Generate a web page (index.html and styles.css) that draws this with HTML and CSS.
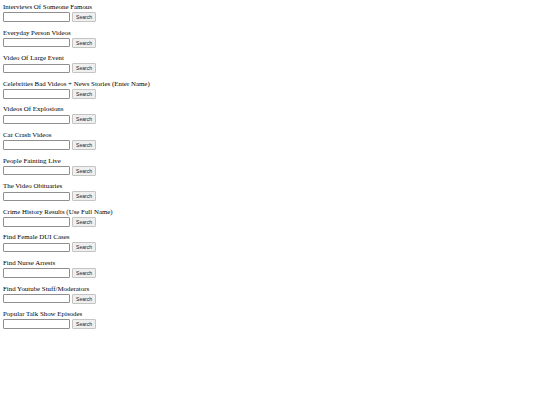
FILE: index.html
```html
<!DOCTYPE html>
<html>
<head>
<meta charset="utf-8">
<link rel="stylesheet" href="styles.css">
</head>
<body>
<div class="list">
  <form class="group"><div class="label">Interviews Of Someone Famous</div><div class="row"><input class="field" type="text"><button class="btn" type="button">Search</button></div></form>
  <form class="group"><div class="label">Everyday Person Videos</div><div class="row"><input class="field" type="text"><button class="btn" type="button">Search</button></div></form>
  <form class="group"><div class="label">Video Of Large Event</div><div class="row"><input class="field" type="text"><button class="btn" type="button">Search</button></div></form>
  <form class="group"><div class="label">Celebrities Bad Videos + News Stories (Enter Name)</div><div class="row"><input class="field" type="text"><button class="btn" type="button">Search</button></div></form>
  <form class="group"><div class="label">Videos Of Explosions</div><div class="row"><input class="field" type="text"><button class="btn" type="button">Search</button></div></form>
  <form class="group"><div class="label">Car Crash Videos</div><div class="row"><input class="field" type="text"><button class="btn" type="button">Search</button></div></form>
  <form class="group"><div class="label">People Fainting Live</div><div class="row"><input class="field" type="text"><button class="btn" type="button">Search</button></div></form>
  <form class="group"><div class="label">The Video Obituaries</div><div class="row"><input class="field" type="text"><button class="btn" type="button">Search</button></div></form>
  <form class="group"><div class="label">Crime History Results (Use Full Name)</div><div class="row"><input class="field" type="text"><button class="btn" type="button">Search</button></div></form>
  <form class="group"><div class="label">Find Female DUI Cases</div><div class="row"><input class="field" type="text"><button class="btn" type="button">Search</button></div></form>
  <form class="group"><div class="label">Find Nurse Arrests</div><div class="row"><input class="field" type="text"><button class="btn" type="button">Search</button></div></form>
  <form class="group"><div class="label">Find Youtube Stuff/Moderators</div><div class="row"><input class="field" type="text"><button class="btn" type="button">Search</button></div></form>
  <form class="group"><div class="label">Popular Talk Show Episodes</div><div class="row"><input class="field" type="text"><button class="btn" type="button">Search</button></div></form>
</div>
</body>
</html>
```
FILE: styles.css
```css
html, body {
  margin: 0;
  padding: 0;
  background: #ffffff;
}
body {
  padding: 3px 3px;
  font-family: "Liberation Serif", "Times New Roman", serif;
  color: #000;
}
.list {
  display: flex;
  flex-direction: column;
  gap: 6px;
}
.group {
  margin: 0;
  display: flex;
  flex-direction: column;
}
.label {
  font-size: 6.9px;
  line-height: 8.6px;
  white-space: nowrap;
  color: #000;
}
.row {
  display: flex;
  align-items: center;
  gap: 2px;
  height: 11px;
}
.field {
  box-sizing: border-box;
  width: 67px;
  height: 9.5px;
  margin: 0;
  padding: 0;
  border: 1px solid #8f8f8f;
  border-radius: 1px;
  background: #fff;
}
.btn {
  box-sizing: border-box;
  width: 24px;
  height: 10px;
  margin: 0;
  padding: 0;
  border: 1px solid #c4c4c4;
  border-radius: 1px;
  background: #efefef;
  font-family: "Liberation Sans", Arial, sans-serif;
  font-size: 5px;
  line-height: 8px;
  color: #222;
}
```
